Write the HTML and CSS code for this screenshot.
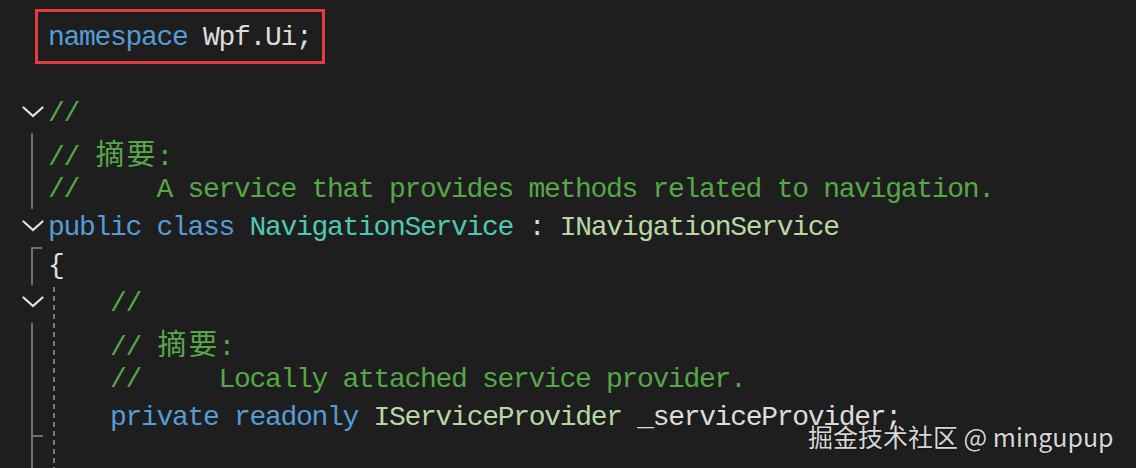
FILE: index.html
```html
<!DOCTYPE html>
<html lang="zh-CN">
<head>
<meta charset="utf-8">
<title>NavigationService</title>
<link rel="stylesheet" href="styles.css">
</head>
<body>
<div class="editor">
  <div class="row"><div class="gutter"></div><div class="code"><span class="kw">namespace</span> Wpf.Ui;</div></div>
  <div class="row"><div class="gutter"></div><div class="code"></div></div>
  <div class="row"><div class="gutter fold"><svg class="chev" viewBox="0 0 22 12" width="22" height="12"><polyline points="1.5,1.5 11,10 20.5,1.5"/></svg></div><div class="code cm">//</div></div>
  <div class="row"><div class="gutter g-line"></div><div class="code cm">// <span class="cjk">摘</span><span class="cjk">要</span>:</div></div>
  <div class="row"><div class="gutter g-line"></div><div class="code cm">//     A service that provides methods related to navigation.</div></div>
  <div class="row"><div class="gutter fold"><svg class="chev" viewBox="0 0 22 12" width="22" height="12"><polyline points="1.5,1.5 11,10 20.5,1.5"/></svg></div><div class="code"><span class="kw">public</span> <span class="kw">class</span> <span class="ty">NavigationService</span> : <span class="it">INavigationService</span></div></div>
  <div class="row"><div class="gutter g-start"></div><div class="code">{</div></div>
  <div class="block">
    <div class="row"><div class="gutter fold"><svg class="chev" viewBox="0 0 22 12" width="22" height="12"><polyline points="1.5,1.5 11,10 20.5,1.5"/></svg></div><div class="code cm">    //</div></div>
    <div class="row"><div class="gutter g-line"></div><div class="code cm">    // <span class="cjk">摘</span><span class="cjk">要</span>:</div></div>
    <div class="row"><div class="gutter g-line"></div><div class="code cm">    //     Locally attached service provider.</div></div>
    <div class="row"><div class="gutter g-line g-endtick"></div><div class="code">    <span class="kw">private</span> <span class="kw">readonly</span> <span class="it">IServiceProvider</span> _serviceProvider;</div></div>
    <div class="row"><div class="gutter g-line"></div><div class="code"></div></div>
  </div>
  <div class="mark-box"></div>
  <div class="watermark">掘金技术社区 @ mingupup</div>
</div>
</body>
</html>
```
FILE: styles.css
```css
html, body {
  margin: 0;
  padding: 0;
  background: #1e1e1e;
  overflow: hidden;
}

.editor {
  position: relative;
  width: 1136px;
  height: 468px;
  padding-top: 18.5px;
  box-sizing: border-box;
  background: #1e1e1e;
  overflow: hidden;
}

.row {
  display: flex;
  height: 38px;
}

.gutter {
  width: 48px;
  flex: none;
  height: 38px;
  display: flex;
  align-items: center;
  justify-content: flex-start;
}

.fold .chev {
  margin-left: 22px;
  margin-top: -4px;
}

.chev polyline {
  fill: none;
  stroke: #e2e2e2;
  stroke-width: 2.2;
  stroke-linecap: round;
  stroke-linejoin: miter;
}

.g-line {
  background: linear-gradient(#707070, #707070) 31px 0 / 2px 100% no-repeat;
}

.g-start {
  background:
    linear-gradient(#707070, #707070) 31px 0 / 11px 2px no-repeat,
    linear-gradient(#707070, #707070) 31px 0 / 2px 100% no-repeat;
  background-position: 31px 0, 31px 0;
}

.g-endtick {
  background:
    linear-gradient(#707070, #707070) 31px 36px / 12px 2px no-repeat,
    linear-gradient(#707070, #707070) 31px 0 / 2px 100% no-repeat;
}

.code {
  flex: 1;
  white-space: pre;
  font-family: "Liberation Mono", "Noto Sans CJK SC", monospace;
  font-size: 28px;
  letter-spacing: -1.3px;
  line-height: 38px;
  color: #dcdcdc;
}

.kw { color: #569cd6; }
.cm { color: #57a64a; }
.ty { color: #4ec9b0; }
.it { color: #b8d7a3; }

.cjk {
  display: inline-block;
  width: 31px;
  text-align: center;
  letter-spacing: 0;
  font-family: "Noto Sans CJK SC", sans-serif;
  font-size: 29px;
  line-height: 38px;
}

.block {
  background-image: repeating-linear-gradient(to bottom, #7a7a7a 0 5px, transparent 5px 9px);
  background-size: 2px 100%;
  background-position: 53px 2px;
  background-repeat: no-repeat;
}

.mark-box {
  position: absolute;
  left: 35px;
  top: 9px;
  width: 290px;
  height: 55px;
  box-sizing: border-box;
  border: 3px solid #e23c3e;
}

.watermark {
  position: absolute;
  left: 808px;
  top: 420px;
  font-family: "Noto Sans CJK SC", sans-serif;
  font-size: 25px;
  line-height: 32px;
  color: #d6d6d6;
  white-space: pre;
  text-shadow: 0 0 2px rgba(0, 0, 0, 0.7);
}
```
